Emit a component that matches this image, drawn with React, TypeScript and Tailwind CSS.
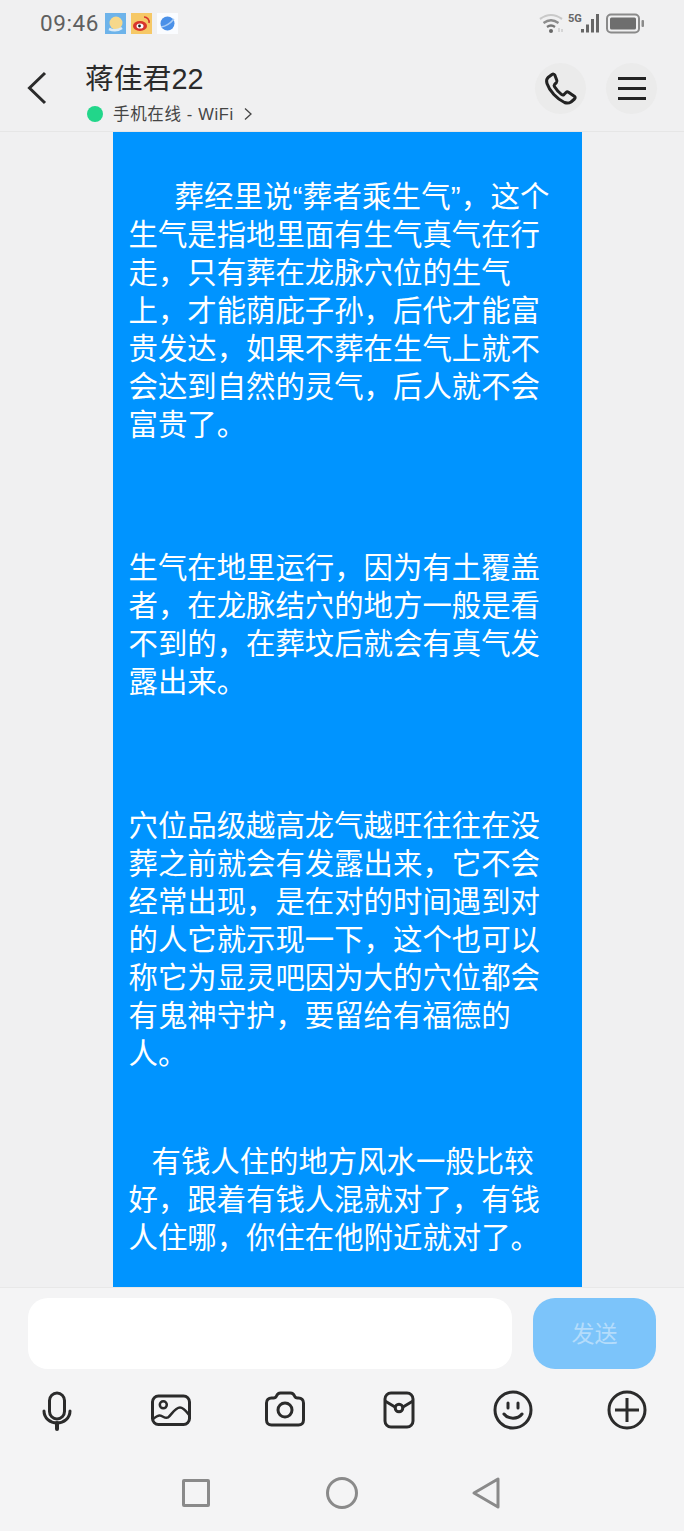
const cjk = "[font-family:'Liberation_Sans','Noto_Sans_CJK_SC',sans-serif]";

const paragraphs = [
  {
    gap: "",
    lines: [
      "葬经里说“葬者乘生气”，这个",
      "生气是指地里面有生气真气在行",
      "走，只有葬在龙脉穴位的生气",
      "上，才能荫庇子孙，后代才能富",
      "贵发达，如果不葬在生气上就不",
      "会达到自然的灵气，后人就不会",
      "富贵了。",
    ],
    indent: "pl-[46px] tracking-[0.2px]",
  },
  {
    gap: "mt-[105px]",
    lines: ["生气在地里运行，因为有土覆盖", "者，在龙脉结穴的地方一般是看", "不到的，在葬坟后就会有真气发", "露出来。"],
    indent: "",
  },
  {
    gap: "mt-[106px]",
    lines: [
      "穴位品级越高龙气越旺往往在没",
      "葬之前就会有发露出来，它不会",
      "经常出现，是在对的时间遇到对",
      "的人它就示现一下，这个也可以",
      "称它为显灵吧因为大的穴位都会",
      "有鬼神守护，要留给有福德的",
      "人。",
    ],
    indent: "",
  },
  {
    gap: "mt-[70px]",
    lines: ["有钱人住的地方风水一般比较", "好，跟着有钱人混就对了，有钱", "人住哪，你住在他附近就对了。"],
    indent: "pl-[23px]",
  },
];

function StatusBar() {
  return (
    <div className="flex h-[46px] items-center pl-[40px] pr-[39px]">
      <span className="font-['Roboto'] text-[22.5px] leading-none tracking-[0.6px] text-[#5f5f5f]">09:46</span>
      <div className="ml-[6px] flex gap-[5px]">
        <svg width="21" height="21" viewBox="0 0 21 21">
          <rect width="21" height="21" fill="#6db3ea" />
          <circle cx="11" cy="10" r="6.500" fill="#f7d88a" />
          <path d="M4 16q7 3 13-1" fill="none" stroke="#dcebf7" strokeWidth="2.500" />
        </svg>
        <svg width="21" height="21" viewBox="0 0 21 21">
          <rect width="21" height="21" fill="#f6c866" />
          <ellipse cx="9" cy="13" rx="7" ry="5" fill="#d8342c" />
          <ellipse cx="9" cy="13" rx="3.500" ry="2.600" fill="#fff" />
          <circle cx="8.500" cy="13" r="1.400" fill="#222" />
          <path d="M13 4a5 5 0 0 1 5 6" fill="none" stroke="#d8342c" strokeWidth="1.600" />
        </svg>
        <svg width="21" height="21" viewBox="0 0 21 21">
          <rect width="21" height="21" fill="#fafcff" />
          <circle cx="10.500" cy="10.500" r="7" fill="#4a90e8" />
          <path d="M4 14q7-1 13-8" fill="none" stroke="#a9ccf5" strokeWidth="1.600" />
        </svg>
      </div>
      <div className="ml-auto flex items-center">
        <svg width="26" height="21" viewBox="0 0 26 21" fill="none">
          <path d="M1 6q11-8 22 0" stroke="#c9c9c9" strokeWidth="2.200" />
          <path d="M4.500 10q7.500-5.500 15 0" stroke="#8c8c8c" strokeWidth="2.200" />
          <path d="M8 14q4-3 8 0" stroke="#777" strokeWidth="2.200" />
          <circle cx="12" cy="18" r="2" fill="#666" />
          <path d="M20 15v4M23 16v3" stroke="#c4c4c4" strokeWidth="1.200" />
        </svg>
        <div className="relative ml-[3px] h-[21px] w-[33px]">
          <span className="absolute left-0 top-[0px] font-['Roboto'] text-[11px] font-bold leading-none text-[#666]">5G</span>
          <svg className="absolute inset-0" width="33" height="21" viewBox="0 0 33 21" fill="#666">
            <rect x="13" y="16" width="3" height="3.500" />
            <rect x="18" y="11.500" width="3" height="8" />
            <rect x="23" y="6" width="3" height="13.500" />
            <rect x="28" y="1" width="3" height="18.500" />
          </svg>
        </div>
        <svg className="ml-[5px]" width="39" height="21" viewBox="0 0 39 21">
          <rect x="1" y="1.500" width="32" height="18" rx="4" fill="none" stroke="#8a8a8a" strokeWidth="2" />
          <rect x="4" y="4.500" width="26" height="12" rx="1.500" fill="#6e6e6e" />
          <rect x="35.500" y="7" width="2.500" height="7" rx="1" fill="#8a8a8a" />
        </svg>
      </div>
    </div>
  );
}

function Header() {
  return (
    <div className="flex h-[86px] items-start border-b border-[#e6e6e6] pl-[27px] pr-[27px]">
      <svg className="mt-[25px]" width="20" height="34" viewBox="0 0 20 34" fill="none">
        <path d="M18 2 2.500 17 18 32" stroke="#2b2b2b" strokeWidth="3" />
      </svg>
      <div className="ml-[38px] flex flex-col">
        <div className={`mt-[16px] text-[28.8px] leading-[34px] text-[#2a2a2a] ${cjk}`}>蒋佳君22</div>
        <div className="mt-[8px] flex items-center">
          <span className="ml-[2px] h-[16px] w-[16px] rounded-full bg-[#22d68a]" />
          <span className={`ml-[10px] text-[16.5px] leading-[20px] tracking-[0.65px] text-[#444] ${cjk}`}>手机在线 - WiFi</span>
          <svg className="ml-[10px]" width="8" height="14" viewBox="0 0 8 14" fill="none">
            <path d="M1 1.500 7 7l-6 5.500" stroke="#444" strokeWidth="1.300" />
          </svg>
        </div>
      </div>
      <div className="ml-auto mt-[17px] flex gap-[20px]">
        <div className="flex h-[51px] w-[51px] items-center justify-center rounded-full bg-[#ebebeb]">
          <svg width="36" height="36" viewBox="0 0 36 36" fill="none">
            <path
              d="M9 3.500 5 6.500c-1.500 1.500-1.800 3.500-1 6 2.500 7.500 10 15.500 17.500 19 2.500 1 4.500.8 6.500-.5l3.500-3c1-1 .8-2-.2-2.800l-5.800-4c-1-.6-1.800-.4-2.500.3l-2 2c-.7.600-1.500.6-2.300.1-2.700-2-5.500-5-7.300-8-.5-.8-.4-1.500.2-2.200l1.800-1.800c.7-.8.800-1.600.3-2.500L11.800 4c-.7-1-1.800-1.200-2.800-.5Z"
              stroke="#232323"
              strokeWidth="3"
              strokeLinejoin="round"
            />
          </svg>
        </div>
        <div className="flex h-[51px] w-[51px] flex-col items-center justify-center gap-[7px] rounded-full bg-[#ebebeb]">
          <span className="h-[3px] w-[28px] bg-[#232323]" />
          <span className="h-[3px] w-[28px] bg-[#232323]" />
          <span className="h-[3px] w-[28px] bg-[#232323]" />
        </div>
      </div>
    </div>
  );
}

function Message() {
  return (
    <div className="min-h-0 flex-1 overflow-hidden">
      <div className={`ml-[113px] h-full w-[469px] bg-[#0094ff] pl-[15.5px] pt-[46px] text-[29.4px] leading-[38px] text-white ${cjk}`}>
        {paragraphs.map((p) => (
          <div key={p.lines[0]} className={p.gap}>
            {p.lines.map((line, i) => (
              <div key={line} className={`whitespace-nowrap ${i === 0 ? p.indent : ""}`}>
                {line}
              </div>
            ))}
          </div>
        ))}
      </div>
    </div>
  );
}

const iconProps = { width: 44, height: 44, viewBox: "0 0 44 44", fill: "none", stroke: "#2b2b2b", strokeWidth: 3 };

function Toolbar() {
  return (
    <div className="mt-[19px] flex justify-between px-[35px]">
      <svg {...iconProps}>
        <rect x="14.500" y="5" width="15" height="26" rx="7.500" />
        <path d="M9 23c0 7 6 12 13 12s13-5 13-12" strokeLinecap="round" />
        <path d="M22 35v6" strokeWidth="4" strokeLinecap="round" />
      </svg>
      <svg {...iconProps}>
        <rect x="3.500" y="8" width="37" height="28.500" rx="6" />
        <circle cx="14.300" cy="16.800" r="3.500" strokeWidth="2.500" />
        <path d="M4 31c2.500-2 5-4 7-3.500 3 .5 5 3.500 8 2 3-2 7-10 12-10 4 0 7 5 9.500 8" strokeWidth="2.500" />
      </svg>
      <svg {...iconProps}>
        <path d="M3.500 15c0-3 2-5 5-5h2c1.500 0 2.500-.8 3-2 .8-2 2-3 4-3h10c2 0 3.200 1 4 3 .5 1.200 1.500 2 3 2h1c3 0 5 2 5 5v17c0 3-2 5-5 5h-27c-3 0-5-2-5-5Z" />
        <circle cx="22" cy="22" r="7" />
      </svg>
      <svg {...iconProps}>
        <rect x="8" y="5" width="28" height="34" rx="6" />
        <path d="M8 13 18 19M36 13 26 19" />
        <circle cx="22" cy="20" r="3.800" />
      </svg>
      <svg {...iconProps}>
        <circle cx="22" cy="22" r="18" />
        <path d="M17 15v5M27 15v5" strokeLinecap="round" />
        <path d="M13 26c4 5.500 14 5.500 18 0" strokeLinecap="round" />
      </svg>
      <svg {...iconProps}>
        <circle cx="22" cy="22" r="18" />
        <path d="M22 10v24M10 22h24" />
      </svg>
    </div>
  );
}

function NavBar() {
  return (
    <div className="mt-[44px] flex items-center pl-[182px]">
      <span className="h-[28px] w-[28px] rounded-[2px] border-[3px] border-[#8a8a8a]" />
      <span className="ml-[116px] h-[32px] w-[32px] rounded-full border-[3px] border-[#8a8a8a]" />
      <svg className="ml-[113px]" width="30" height="34" viewBox="0 0 30 34" fill="none">
        <path d="M27 3v28L3 17Z" stroke="#8a8a8a" strokeWidth="3" strokeLinejoin="round" />
      </svg>
    </div>
  );
}

export default function App() {
  return (
    <div className="flex h-[1531px] w-[684px] flex-col overflow-hidden bg-[#f0f0f1]">
      <StatusBar />
      <Header />
      <Message />
      <div className="h-[244px] shrink-0 border-t border-[#e8e8e8] bg-[#f4f4f5]">
        <div className="flex gap-[21px] pl-[28px] pt-[10px]">
          <div className="h-[71px] w-[484px] rounded-[20px] bg-white" />
          <button className={`h-[71px] w-[123px] rounded-[22px] bg-[#7cc4fa] pt-[1px] text-[23px] text-[#b4dcfb] ${cjk}`}>发送</button>
        </div>
        <Toolbar />
        <NavBar />
      </div>
    </div>
  );
}
